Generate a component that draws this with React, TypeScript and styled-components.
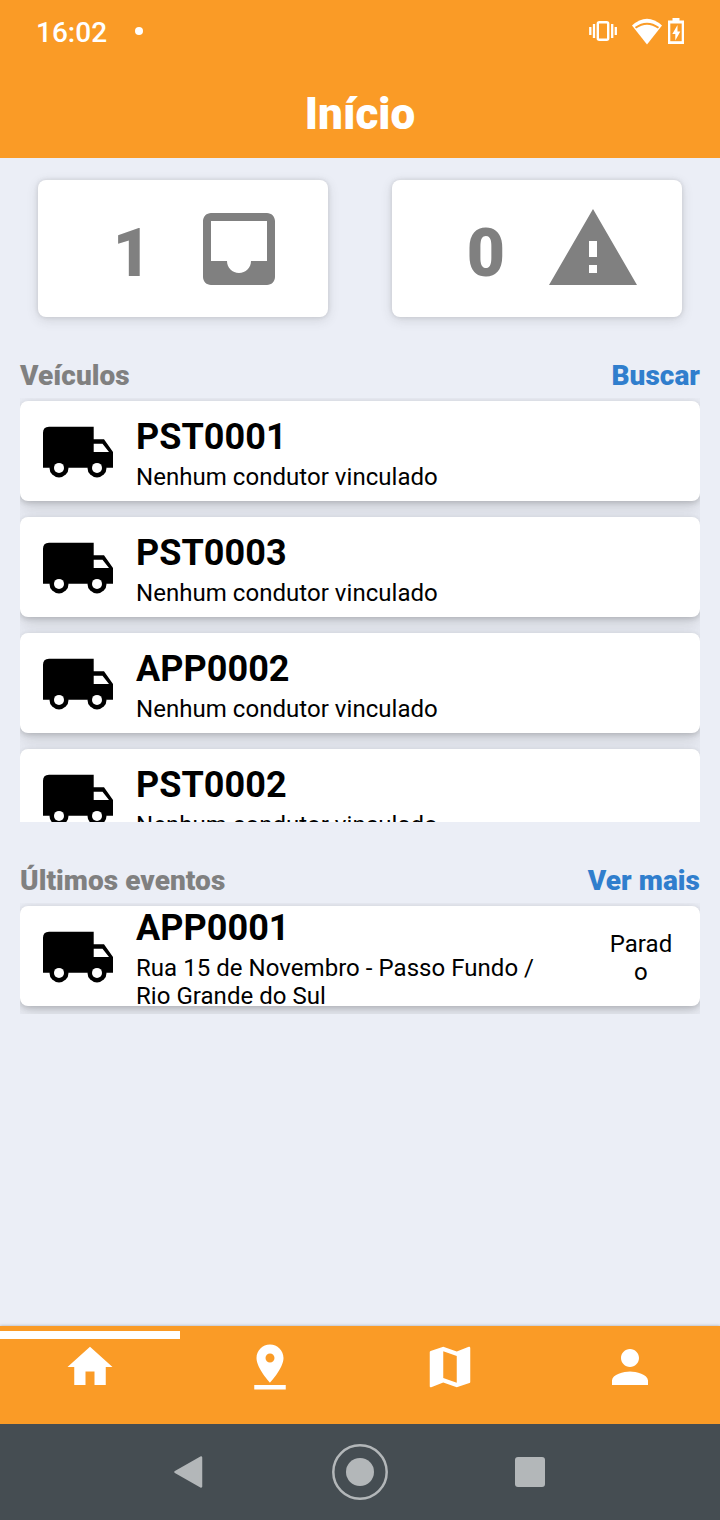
import React from "react";
import styled, { createGlobalStyle } from "styled-components";

const Global = createGlobalStyle`
  * { box-sizing: border-box; }
  body { margin: 0; background: #ebeef6; font-family: Roboto, "Liberation Sans", sans-serif; }
  svg { display: block; flex: none; }
`;

const Screen = styled.div`
  width: 720px;
  height: 1520px;
  display: flex;
  flex-direction: column;
  overflow: hidden;
  background: #ebeef6;
  color: #000;
`;
const Header = styled.header`
  height: 158px;
  background: #fa9b26;
  color: #fff;
  flex: none;
`;
const StatusBar = styled.div`
  height: 64px;
  display: flex;
  align-items: center;
  padding: 0 34px 0 36px;
`;
const Clock = styled.span`
  font-size: 28px;
  line-height: 34px;
  font-weight: 500;
  width: 99px;
  padding-top: 2px;
`;
const NoticeDot = styled.span`
  width: 8px;
  height: 8px;
  border-radius: 50%;
  background: #fff;
  margin-bottom: 2px;
`;
const StatusIcons = styled.div`
  margin-left: auto;
  display: flex;
  align-items: center;
`;
const Title = styled.h1`
  margin: 0;
  height: 94px;
  padding-top: 24px;
  font-size: 44px;
  line-height: 52px;
  font-weight: 900;
  text-align: center;
`;
const Content = styled.main`
  flex: 1;
  min-height: 0;
  padding: 22px 20px 0;
`;
const Stats = styled.div`
  display: flex;
  justify-content: space-between;
  padding: 0 18px;
`;
const StatCard = styled.section`
  width: 290px;
  height: 137px;
  border-radius: 8px;
  background: #fff;
  box-shadow: 0 3px 12px rgba(60, 60, 60, 0.15), 0 0 4px rgba(60, 60, 60, 0.16);
  color: #808080;
  display: flex;
  align-items: center;
  justify-content: flex-end;
  gap: 40px;
  padding: 1px 41px 0 0;
`;
const StatValue = styled.span`
  font-size: 66px;
  line-height: 78px;
  font-weight: 900;
  padding-top: 10px;
`;
const SectionHead = styled.div`
  display: flex;
  justify-content: space-between;
  align-items: center;
  margin-top: 42px;
  height: 34px;
  font-size: 28px;
  line-height: 34px;
  font-weight: 900;
  letter-spacing: 0.05px;
  color: #808080;
`;
const HeadLink = styled.a`
  color: #307ecd;
`;
const List = styled.div<{ $height: number }>`
  height: ${(p) => p.$height}px;
  margin-top: 5px;
  padding-top: 3px;
  overflow: hidden;
`;
const Row = styled.article`
  height: 100px;
  margin-bottom: 16px;
  border-radius: 8px;
  background: #fff;
  box-shadow: 0 5px 16px rgba(60, 60, 60, 0.22), 0 2px 5px rgba(60, 60, 60, 0.18);
  display: flex;
  align-items: center;
  padding: 0 20px 0 22px;
`;
const RowText = styled.div`
  width: 414px;
  margin-left: 22px;
  padding-top: 4px;
`;
const Plate = styled.div`
  font-size: 36px;
  line-height: 44px;
  font-weight: 700;
  letter-spacing: 0.05px;
  margin-bottom: 4px;
`;
const Detail = styled.div`
  font-size: 24px;
  line-height: 28px;
  letter-spacing: 0.04px;
`;
const State = styled.div`
  width: 78px;
  margin-left: auto;
  font-size: 24px;
  line-height: 28px;
  letter-spacing: 0.07px;
  text-align: center;
  padding: 4px 7px 0;
  word-break: break-all;
`;
const TabBar = styled.nav`
  height: 98px;
  flex: none;
  background: #fa9b26;
  box-shadow: 0 0 3px rgba(60, 60, 60, 0.4);
  display: flex;
  color: #fff;
`;
const Tab = styled.a<{ $active?: boolean }>`
  flex: 1;
  display: flex;
  flex-direction: column;
  align-items: center;
  padding-top: 5px;
  &::before {
    content: "";
    width: 100%;
    height: 8px;
    margin-bottom: 1px;
    background: ${(p) => (p.$active ? "#fff" : "transparent")};
  }
`;
const SystemNav = styled.footer`
  height: 96px;
  flex: none;
  background: #454d52;
  display: flex;
  align-items: center;
  justify-content: center;
  gap: 114px;
`;

const Glyph = ({ d, size }: { d: string; size: number }) => (
  <svg width={size} height={size} viewBox="0 0 24 24" fill="currentColor">
    <path d={d} />
  </svg>
);

const inbox =
  "M19 3H5c-1.1 0-2 .9-2 2v14c0 1.1.9 2 2 2h14c1.1 0 2-.9 2-2V5c0-1.1-.9-2-2-2zm0 12h-4c0 1.66-1.34 3-3 3s-3-1.34-3-3H5V5h14v10z";
const warning = "M1 21h22L12 2 1 21zm12-3h-2v-2h2v2zm0-4h-2v-4h2v4z";
const tabs = [
  "M10 20v-6h4v6h5v-8h3L12 3 2 12h3v8z",
  "M18 8c0-3.31-2.69-6-6-6S6 4.69 6 8c0 4.5 6 11 6 11s6-6.5 6-11zm-8 0c0-1.1.9-2 2-2s2 .9 2 2-.89 2-2 2c-1.1 0-2-.9-2-2zM5 20v2h14v-2H5z",
  "M20.5 3l-.16.03L15 5.1 9 3 3.36 4.9c-.21.07-.36.25-.36.48V20.5c0 .28.22.5.5.5l.16-.03L9 18.9l6 2.1 5.64-1.9c.21-.07.36-.25.36-.48V3.5c0-.28-.22-.5-.5-.5zM15 19l-6-2.11V5l6 2.11V19z",
  "M12 12c2.21 0 4-1.79 4-4s-1.79-4-4-4-4 1.79-4 4 1.79 4 4 4zm0 2c-2.67 0-8 1.34-8 4v2h16v-2c0-2.66-5.33-4-8-4z",
];

const Truck = () => (
  <svg width="72" height="54" viewBox="0 0 72 54">
    <path
      fillRule="evenodd"
      d="M7 2.7H51.7V15.3H62L71 28V43.7H1V8.7Q1 2.7 7 2.7ZM55.7 19.8H51.7V28H67L60.500 19.8Z"
    />
    <circle cx="17" cy="43.9" r="9.5" />
    <circle cx="55" cy="43.9" r="9.5" />
    <circle cx="17" cy="43.9" r="5" fill="#fff" />
    <circle cx="55" cy="43.9" r="5" fill="#fff" />
  </svg>
);

const VehicleRow = ({ plate, detail, state }: { plate: string; detail: string; state?: string }) => (
  <Row>
    <Truck />
    <RowText>
      <Plate>{plate}</Plate>
      <Detail>{detail}</Detail>
    </RowText>
    {state && <State>{state}</State>}
  </Row>
);

export default function App() {
  return (
    <Screen>
      <Global />
      <Header>
        <StatusBar>
          <Clock>16:02</Clock>
          <NoticeDot />
          <StatusIcons>
            <svg width="98" height="30" viewBox="0 0 98 30" fill="none" stroke="#fff">
              <rect x="9.8" y="5.3" width="10.4" height="17.4" rx="1.5" strokeWidth="2.4" />
              <path d="M2.3 10v8M6 7v14M24.2 7v14M27.8 10v8" strokeWidth="2.3" />
              <path d="M59 27.500L44 8.5Q59-5 74 8.5Z" fill="#fff" stroke="none" />
              <path d="M47.5 10.8Q59 2.5 70.5 10.8" stroke="#fa9b26" strokeWidth="2" />
              <path d="M80 3.5h4.5V1h7v2.500H96V27H80z" fill="#fff" stroke="none" />
              <path d="M82.3 6.5h11.4v17.7H82.3z" fill="#fa9b26" stroke="none" />
              <path d="M89.500 8l-5.200 9h3v6.500l5-9h-2.800z" fill="#fff" stroke="none" />
            </svg>
          </StatusIcons>
        </StatusBar>
        <Title>Início</Title>
      </Header>
      <Content>
        <Stats>
          <StatCard>
            <StatValue>1</StatValue>
            <Glyph d={inbox} size={96} />
          </StatCard>
          <StatCard>
            <StatValue>0</StatValue>
            <Glyph d={warning} size={96} />
          </StatCard>
        </Stats>
        <SectionHead>
          <span>Veículos</span>
          <HeadLink>Buscar</HeadLink>
        </SectionHead>
        <List $height={424}>
          {["PST0001", "PST0003", "APP0002", "PST0002"].map((plate) => (
            <VehicleRow key={plate} plate={plate} detail="Nenhum condutor vinculado" />
          ))}
        </List>
        <SectionHead>
          <span>Últimos eventos</span>
          <HeadLink>Ver mais</HeadLink>
        </SectionHead>
        <List $height={111}>
          <VehicleRow plate="APP0001" detail="Rua 15 de Novembro - Passo Fundo / Rio Grande do Sul" state="Parado" />
        </List>
      </Content>
      <TabBar>
        {tabs.map((d, i) => (
          <Tab key={d} $active={i === 0}>
            <Glyph d={d} size={54} />
          </Tab>
        ))}
      </TabBar>
      <SystemNav>
        <svg width="44" height="56" viewBox="0 0 44 56">
          <path d="M27 13.5L1.5 28L27 42.5Z" fill="#b3b7b9" stroke="#b3b7b9" strokeWidth="2.5" strokeLinejoin="round" />
        </svg>
        <svg width="56" height="56" viewBox="0 0 56 56">
          <circle cx="28" cy="28" r="26.7" fill="none" stroke="#b3b7b9" strokeWidth="2.5" />
          <circle cx="28" cy="28" r="14" fill="#b3b7b9" />
        </svg>
        <svg width="44" height="56" viewBox="0 0 44 56">
          <rect x="13" y="13" width="30" height="30" rx="3" fill="#b3b7b9" />
        </svg>
      </SystemNav>
    </Screen>
  );
}
